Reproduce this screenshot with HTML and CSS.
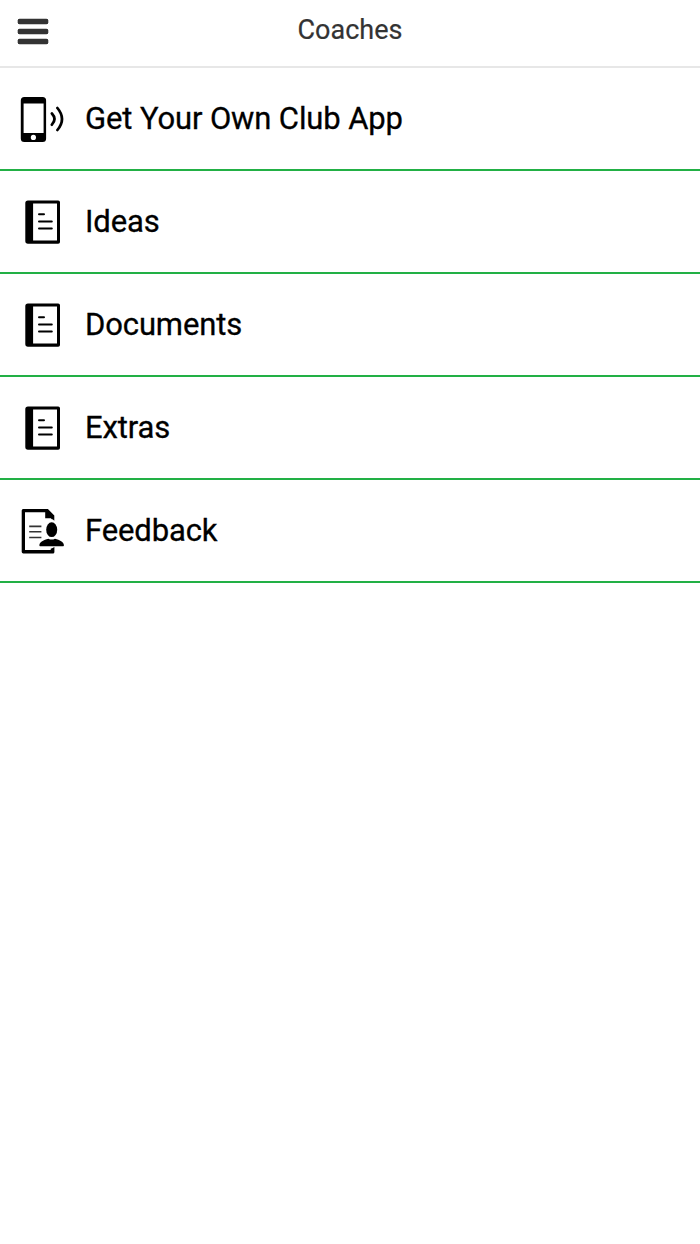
FILE: index.html
```html
<!DOCTYPE html>
<html lang="en">
<head>
    <meta charset="UTF-8">
    <meta name="viewport" content="width=device-width, initial-scale=1.0">
    <title>Coaches</title>
    <link rel="stylesheet" href="styles.css">
</head>
<body>
    <!-- icons used more than once -->
    <svg class="icon-defs">
        <symbol id="icon-book" viewBox="0 0 47 47">
            <path fill-rule="evenodd" d="M9 2.4h30.2a1.8 1.8 0 0 1 1.8 1.8v39.7a1.8 1.8 0 0 1-1.8 1.8H9a2.7 2.7 0 0 1-2.7-2.7V5.1A2.7 2.7 0 0 1 9 2.4zM14.1 5.4v37H38v-37z"/>
            <path d="M20 16.3h5M20 23.4h12.8M20 30.5h12.8" stroke="#000" stroke-width="2" stroke-linecap="round"/>
        </symbol>
    </svg>

    <header class="header">
        <button class="menu-btn" aria-label="Menu">
            <span></span>
            <span></span>
            <span></span>
        </button>
        <h1>Coaches</h1>
    </header>

    <ul class="menu-list">
        <li>
            <svg class="icon" viewBox="0 0 47 47">
                <path fill-rule="evenodd" d="M5.3 2.1h18.3a3.5 3.5 0 0 1 3.5 3.5v37.9a3.5 3.5 0 0 1-3.5 3.5H5.3a3.5 3.5 0 0 1-3.5-3.5V5.6a3.5 3.5 0 0 1 3.5-3.5zM4.6 8.5V38h20V8.5z"/>
                <circle cx="14.4" cy="42.4" r="2.6" fill="#fff"/>
                <path d="M32.9 18.5q5.2 5.6 0 11.2M38.4 13q9.2 11 0 22" fill="none" stroke="#000" stroke-width="2.7" stroke-linecap="round"/>
            </svg>
            <span>Get Your Own Club App</span>
        </li>
        <li>
            <svg class="icon"><use href="#icon-book"/></svg>
            <span>Ideas</span>
        </li>
        <li>
            <svg class="icon"><use href="#icon-book"/></svg>
            <span>Documents</span>
        </li>
        <li>
            <svg class="icon"><use href="#icon-book"/></svg>
            <span>Extras</span>
        </li>
        <li>
            <svg class="icon" viewBox="0 0 47 47">
                <path d="M4.3 2.1h24.6l6.4 6.5v5.1q-1.2-1.4-3-1.6l-.2-.8h-5.9V5.2H6v37.9h25.7v-1.4q2-.4 3.7-1.7v4.9a1.5 1.5 0 0 1-1.5 1.5H4.3a1.7 1.7 0 0 1-1.6-1.5V3.6a1.5 1.5 0 0 1 1.6-1.5z"/>
                <path d="M10.2 19.4h12.2M10.2 24.8h12.2M10.2 30.5h12.2" stroke="#333" stroke-width="1.6"/>
                <ellipse cx="32.7" cy="22.7" rx="5.5" ry="7.4"/>
                <path d="M29.4 31.7q3.3 1.8 6.6 0c4.6 1.4 8.9 3 8.9 6.5 0 .8-.4 1.1-1 1.1H21.4c-.6 0-1-.3-1-1.1 0-3.5 4.4-5.1 9-6.5z"/>
            </svg>
            <span>Feedback</span>
        </li>
    </ul>
</body>
</html>
```

FILE: styles.css
```css
* {
    box-sizing: border-box;
}

body {
    margin: 0;
    background-color: #fff;
    font-family: Roboto, sans-serif;
}

.icon-defs {
    display: none;
}

/* header */
.header {
    display: grid;
    grid-template-columns: 66px 1fr 66px;
    height: 68px;
    border-bottom: 2px solid #e7e7e7;
}

.header h1 {
    margin: 0;
    padding-top: 14px;
    font-size: 27px;
    font-weight: 400;
    line-height: 32px;
    text-align: center;
    color: #333;
    -webkit-text-stroke: 0.2px #333;
}

.menu-btn {
    display: flex;
    flex-direction: column;
    gap: 5px;
    padding: 19px 17px 0 18px;
    border: none;
    background: none;
    cursor: pointer;
}

.menu-btn span {
    width: 30px;
    height: 5px;
    border-radius: 1.5px;
    background-color: #333;
    box-shadow: 0 0 0 0.3px #333;
}

/* list */
.menu-list {
    margin: 0;
    padding: 0;
    list-style: none;
}

.menu-list li {
    display: flex;
    align-items: center;
    gap: 19px;
    height: 103px;
    padding-left: 19px;
    border-bottom: 2px solid #22b045;
    font-size: 31px;
    line-height: 36px;
    letter-spacing: -0.12px;
    color: #000;
    -webkit-text-stroke: 0.3px #000;
}

.icon {
    width: 47px;
    height: 47px;
}
```
